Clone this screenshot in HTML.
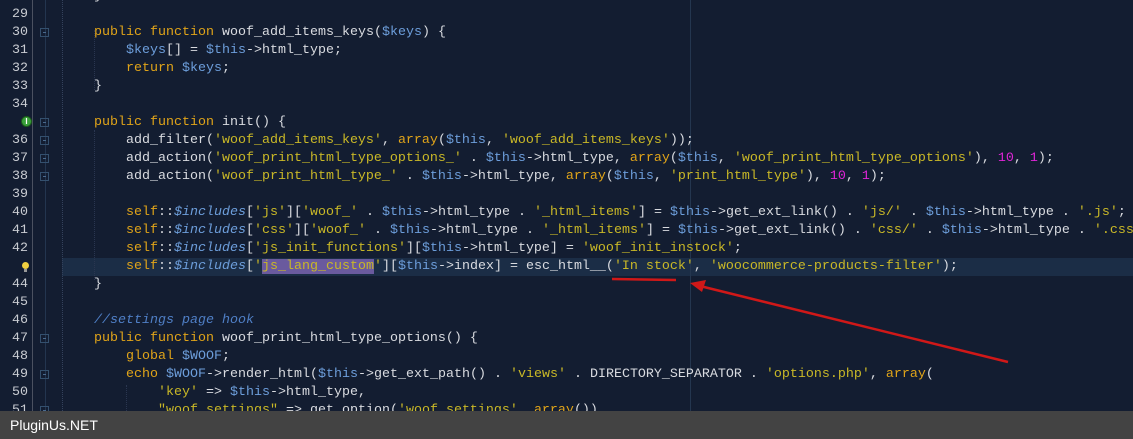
<!DOCTYPE html>
<html><head><meta charset="utf-8"><style>
html,body{margin:0;padding:0;}
body{width:1133px;height:439px;overflow:hidden;background:#131d31;position:relative;font-family:"Liberation Mono",monospace;font-size:13.33px;}
.ln{position:absolute;left:0;width:28px;text-align:right;color:#c9ccd2;line-height:18px;height:18px}
.c{position:absolute;left:62px;white-space:pre;color:#d9dbe0;line-height:18px;height:18px}
.k{color:#e0a419}.s{color:#c9b827}.v{color:#6d9edb}.i{color:#6d9edb;font-style:italic}.n{color:#e025d8}.cm{color:#4f7fc6;font-style:italic}
.sel{background:#6a5a9e}
.fold{position:absolute;left:40px;width:9px;height:9px;border:1px solid #34506e;box-sizing:border-box}
.fold:after{content:"";position:absolute;left:2px;top:3px;width:3px;height:1px;background:#4a6a8e}
</style></head><body>
<div style="position:absolute;left:62px;top:258px;width:1071px;height:18px;background:#1b2d46"></div>
<div style="position:absolute;left:32px;top:0;width:1px;height:411px;background:#4b5160"></div>
<div style="position:absolute;left:45px;top:0;width:1px;height:411px;background:#23354f"></div>
<div style="position:absolute;left:62px;top:0;width:0;height:411px;border-left:1px dotted #34425c"></div>
<div style="position:absolute;left:94px;top:30px;width:0;height:60px;border-left:1px dotted #2a3650"></div>
<div style="position:absolute;left:94px;top:130px;width:0;height:150px;border-left:1px dotted #2a3650"></div>
<div style="position:absolute;left:126px;top:385px;width:0;height:30px;border-left:1px dotted #2a3650"></div>
<div style="position:absolute;left:690px;top:0;width:1px;height:411px;background:#24364f"></div>

<div class="fold" style="top:28px"></div><div class="fold" style="top:118px"></div><div class="fold" style="top:136px"></div><div class="fold" style="top:154px"></div><div class="fold" style="top:172px"></div><div class="fold" style="top:334px"></div><div class="fold" style="top:370px"></div><div class="fold" style="top:406px"></div>
<div style="position:absolute;left:21px;top:116px;width:11px;height:11px;border-radius:50%;background:#3aa03a;border:1px solid #1c5a1c;box-sizing:border-box;color:#fff;font:bold 8px 'Liberation Sans',sans-serif;text-align:center;line-height:9px">I</div>
<div style="position:absolute;left:22px;top:262px;width:7px;height:7px;border-radius:50%;background:#f0d040"></div>
<div style="position:absolute;left:24px;top:269px;width:3px;height:3px;background:#999"></div>

<div class="ln" style="top:-12px">28</div><div class="c" style="top:-12px">    }</div>
<div class="ln" style="top:6px">29</div>
<div class="ln" style="top:24px">30</div><div class="c" style="top:24px">    <span class="k">public function</span> woof_add_items_keys(<span class="v">$keys</span>) {</div>
<div class="ln" style="top:42px">31</div><div class="c" style="top:42px">        <span class="v">$keys</span>[] = <span class="v">$this</span>-&gt;html_type;</div>
<div class="ln" style="top:60px">32</div><div class="c" style="top:60px">        <span class="k">return</span> <span class="v">$keys</span>;</div>
<div class="ln" style="top:78px">33</div><div class="c" style="top:78px">    }</div>
<div class="ln" style="top:96px">34</div>
<div class="c" style="top:114px">    <span class="k">public function</span> init() {</div>
<div class="ln" style="top:132px">36</div><div class="c" style="top:132px">        add_filter(<span class="s">'woof_add_items_keys'</span>, <span class="k">array</span>(<span class="v">$this</span>, <span class="s">'woof_add_items_keys'</span>));</div>
<div class="ln" style="top:150px">37</div><div class="c" style="top:150px">        add_action(<span class="s">'woof_print_html_type_options_'</span> . <span class="v">$this</span>-&gt;html_type, <span class="k">array</span>(<span class="v">$this</span>, <span class="s">'woof_print_html_type_options'</span>), <span class="n">10</span>, <span class="n">1</span>);</div>
<div class="ln" style="top:168px">38</div><div class="c" style="top:168px">        add_action(<span class="s">'woof_print_html_type_'</span> . <span class="v">$this</span>-&gt;html_type, <span class="k">array</span>(<span class="v">$this</span>, <span class="s">'print_html_type'</span>), <span class="n">10</span>, <span class="n">1</span>);</div>
<div class="ln" style="top:186px">39</div>
<div class="ln" style="top:204px">40</div><div class="c" style="top:204px">        <span class="k">self</span>::<span class="i">$includes</span>[<span class="s">'js'</span>][<span class="s">'woof_'</span> . <span class="v">$this</span>-&gt;html_type . <span class="s">'_html_items'</span>] = <span class="v">$this</span>-&gt;get_ext_link() . <span class="s">'js/'</span> . <span class="v">$this</span>-&gt;html_type . <span class="s">'.js'</span>;</div>
<div class="ln" style="top:222px">41</div><div class="c" style="top:222px">        <span class="k">self</span>::<span class="i">$includes</span>[<span class="s">'css'</span>][<span class="s">'woof_'</span> . <span class="v">$this</span>-&gt;html_type . <span class="s">'_html_items'</span>] = <span class="v">$this</span>-&gt;get_ext_link() . <span class="s">'css/'</span> . <span class="v">$this</span>-&gt;html_type . <span class="s">'.css'</span>;</div>
<div class="ln" style="top:240px">42</div><div class="c" style="top:240px">        <span class="k">self</span>::<span class="i">$includes</span>[<span class="s">'js_init_functions'</span>][<span class="v">$this</span>-&gt;html_type] = <span class="s">'woof_init_instock'</span>;</div>
<div class="c" style="top:258px">        <span class="k">self</span>::<span class="i">$includes</span>[<span class="s">'<span class="sel">js_lang_custom</span>'</span>][<span class="v">$this</span>-&gt;index] = esc_html__(<span class="s">'In stock'</span>, <span class="s">'woocommerce-products-filter'</span>);</div>
<div class="ln" style="top:276px">44</div><div class="c" style="top:276px">    }</div>
<div class="ln" style="top:294px">45</div>
<div class="ln" style="top:312px">46</div><div class="c" style="top:312px">    <span class="cm">//settings page hook</span></div>
<div class="ln" style="top:330px">47</div><div class="c" style="top:330px">    <span class="k">public function</span> woof_print_html_type_options() {</div>
<div class="ln" style="top:348px">48</div><div class="c" style="top:348px">        <span class="k">global</span> <span class="v">$WOOF</span>;</div>
<div class="ln" style="top:366px">49</div><div class="c" style="top:366px">        <span class="k">echo</span> <span class="v">$WOOF</span>-&gt;render_html(<span class="v">$this</span>-&gt;get_ext_path() . <span class="s">'views'</span> . DIRECTORY_SEPARATOR . <span class="s">'options.php'</span>, <span class="k">array</span>(</div>
<div class="ln" style="top:384px">50</div><div class="c" style="top:384px">            <span class="s">'key'</span> =&gt; <span class="v">$this</span>-&gt;html_type,</div>
<div class="ln" style="top:402px">51</div><div class="c" style="top:402px">            <span class="s">"woof_settings"</span> =&gt; get_option(<span class="s">'woof_settings'</span>, <span class="k">array</span>())</div>

<svg style="position:absolute;left:0;top:0" width="1133" height="439">
<line x1="612" y1="279" x2="676" y2="280" stroke="#d01818" stroke-width="2.5"/>
<line x1="1008" y1="362" x2="700" y2="286" stroke="#d01818" stroke-width="2.5"/>
<polygon points="690,283 706,280 702,292" fill="#d01818"/>
</svg>
<div style="position:absolute;left:0;top:411px;width:1133px;height:28px;background:#434343;color:#fff;font:14px 'Liberation Sans',sans-serif;line-height:28px;padding-left:10px;box-sizing:border-box">PluginUs.NET</div>
</body></html>
